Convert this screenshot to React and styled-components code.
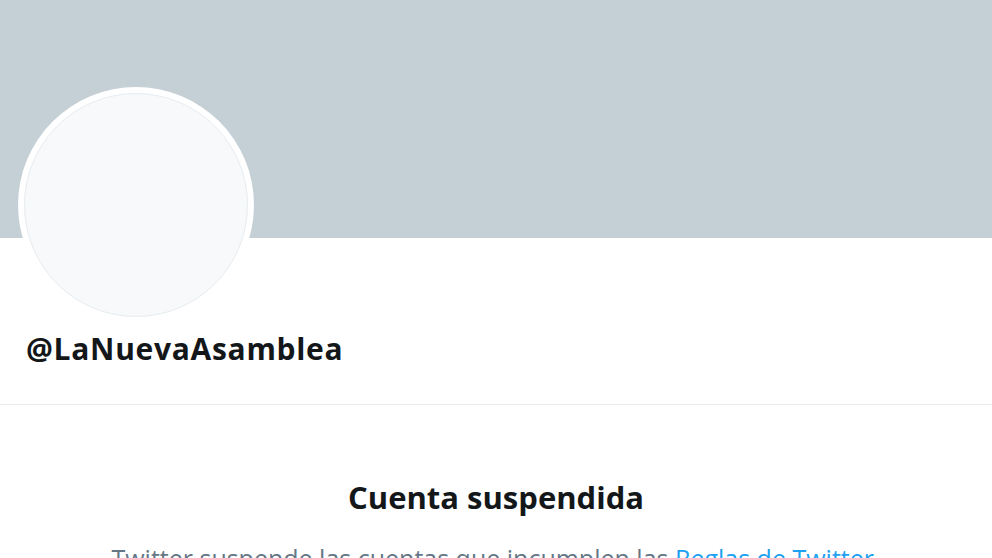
import React from "react";
import styled, { createGlobalStyle } from "styled-components";

const Global = createGlobalStyle`
  html, body { margin: 0; padding: 0; background: #ffffff; }
  body { font-family: "Open Sans", "Noto Sans", sans-serif; overflow: hidden; }
`;

const Page = styled.div`
  width: 992px;
  height: 558px;
  overflow: hidden;
  background: #ffffff;
`;

const Banner = styled.div`
  height: 238px;
  background: #c4cfd6;
`;

const Profile = styled.div`
  display: flex;
  flex-direction: column;
  align-items: flex-start;
  padding: 0 0 0 18px;
  height: 167px;
  border-bottom: 1px solid #e6ecf0;
  box-sizing: border-box;
`;

const AvatarRing = styled.div`
  margin-top: -151px;
  width: 236px;
  height: 236px;
  flex-shrink: 0;
  border-radius: 50%;
  background: #ffffff;
  display: flex;
  align-items: center;
  justify-content: center;
`;

const Avatar = styled.div`
  width: 222px;
  height: 222px;
  border-radius: 50%;
  background: #f7f9fa;
  border: 1px solid #e6ecf0;
`;

const Handle = styled.div`
  margin: 8px 0 0 8px;
  font-family: "Open Sans", sans-serif;
  font-weight: 700;
  font-size: 30px;
  line-height: 36px;
  color: #14171a;
  letter-spacing: 0.7px;
`;

const Notice = styled.div`
  display: flex;
  flex-direction: column;
  align-items: center;
  padding-top: 72px;
`;

const Title = styled.h1`
  margin: 0;
  font-family: "Open Sans", sans-serif;
  font-weight: 700;
  font-size: 31px;
  line-height: 40px;
  color: #14171a;
`;

const Body = styled.p`
  margin: 26px 0 0;
  font-family: "Open Sans", sans-serif;
  font-size: 25px;
  line-height: 30px;
  color: #657786;
  white-space: nowrap;
`;

const Link = styled.a`
  color: #1da1f2;
  text-decoration: none;
`;

export default function App() {
  return (
    <Page>
      <Global />
      <Banner />
      <Profile>
        <AvatarRing>
          <Avatar />
        </AvatarRing>
        <Handle>@LaNuevaAsamblea</Handle>
      </Profile>
      <Notice>
        <Title>Cuenta suspendida</Title>
        <Body>
          Twitter suspende las cuentas que incumplen las <Link href="#">Reglas de Twitter</Link>.
        </Body>
      </Notice>
    </Page>
  );
}
